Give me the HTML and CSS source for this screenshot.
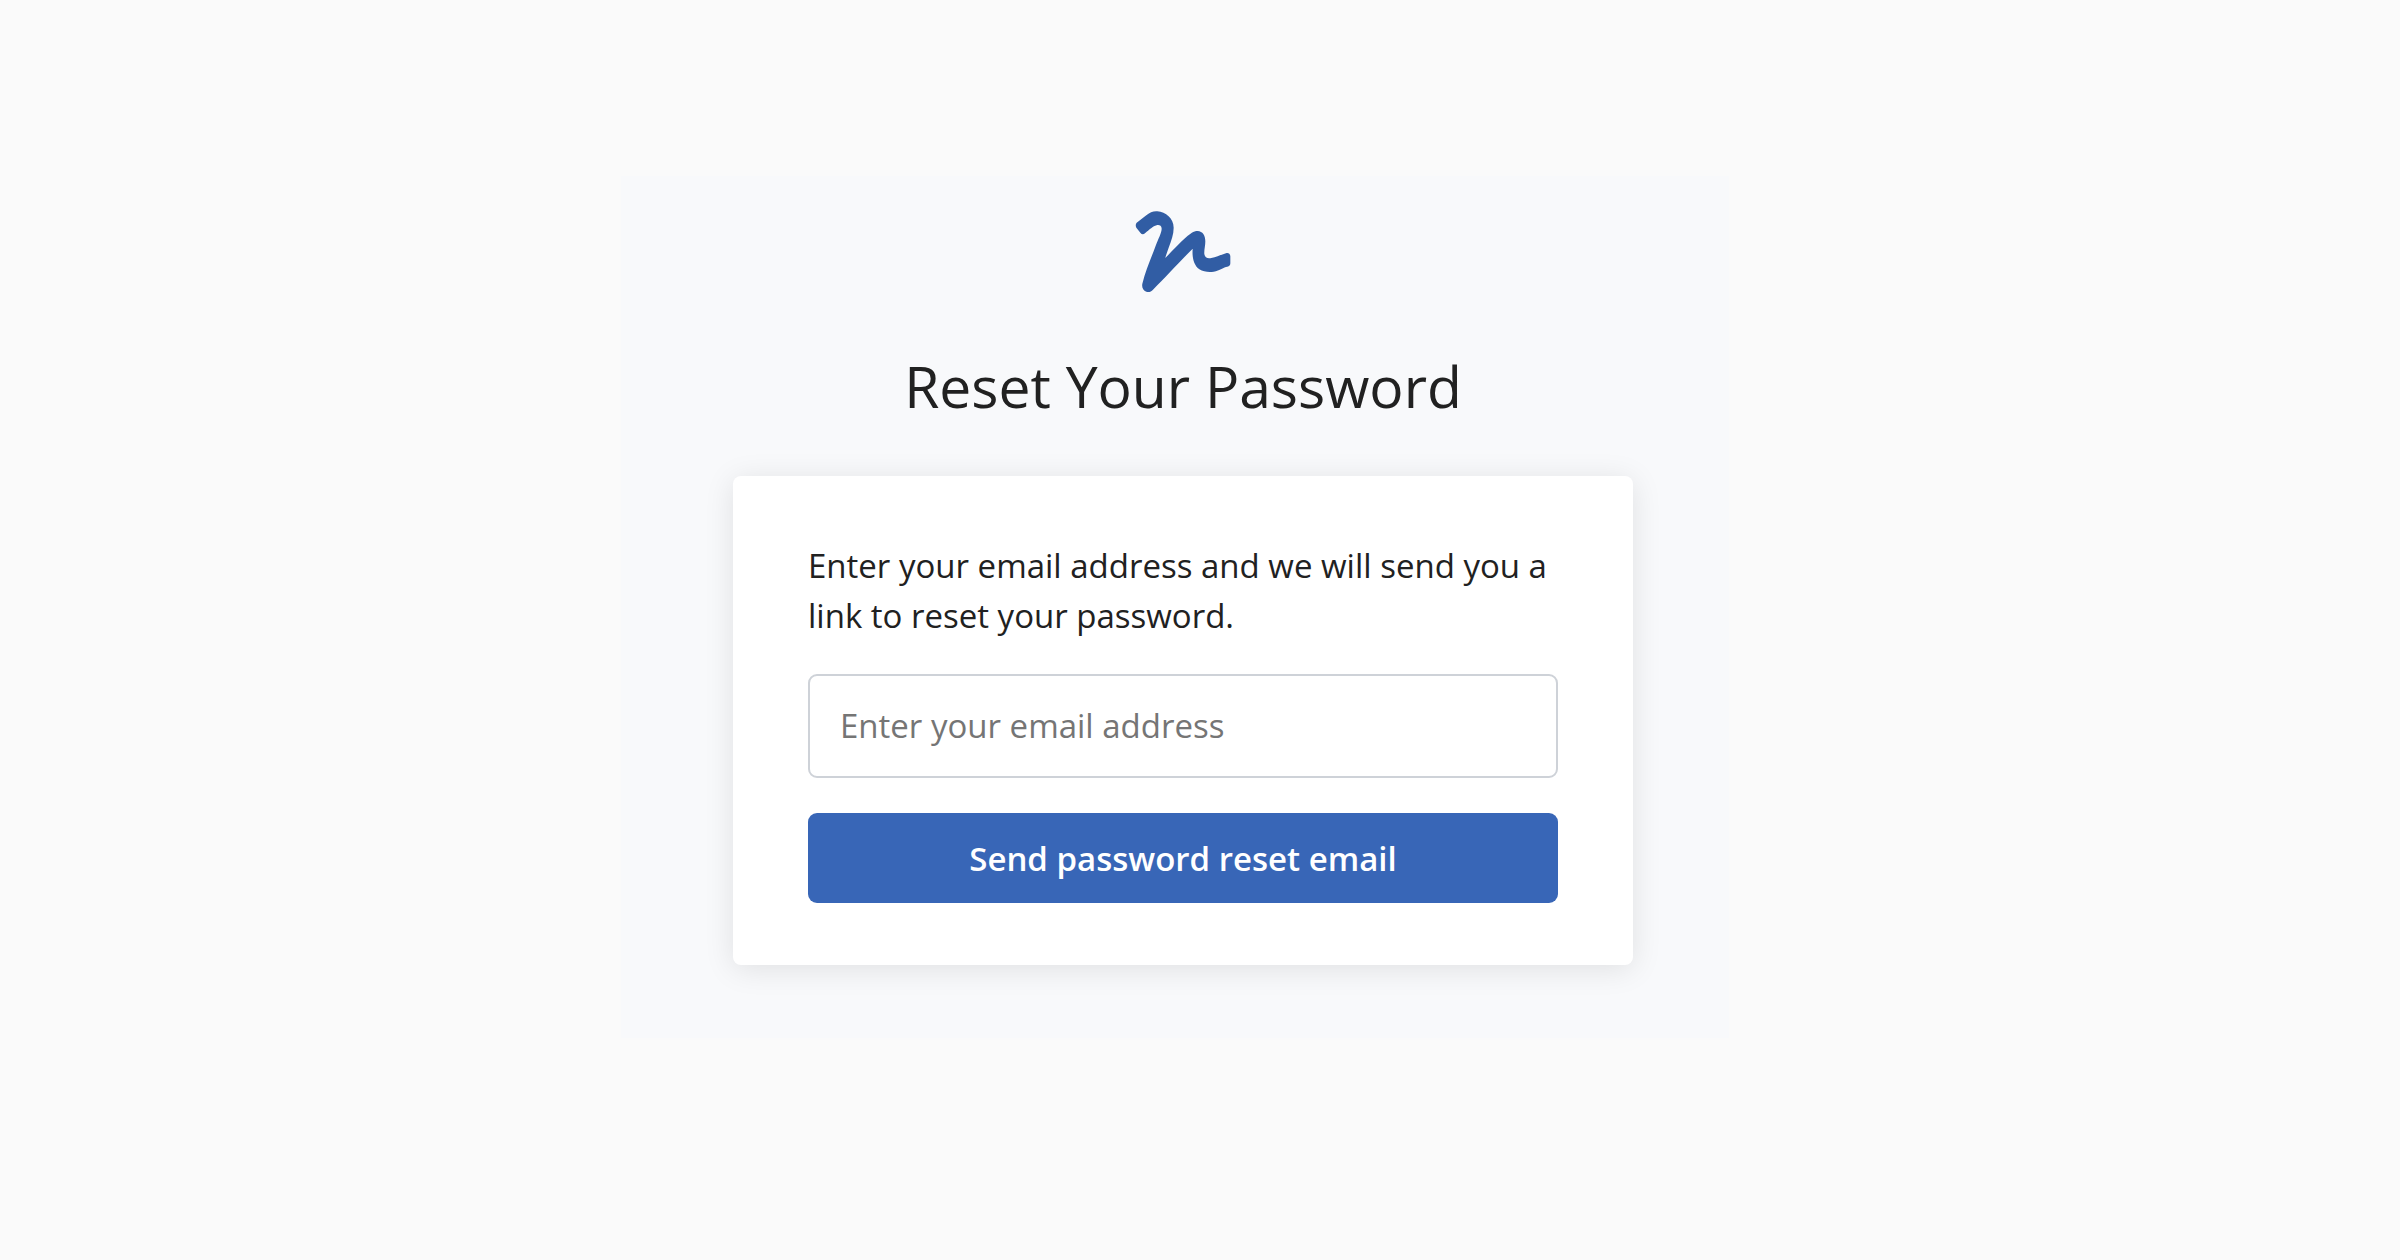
FILE: index.html
```html
<!doctype html>
<html lang="en">
<head>
<meta charset="utf-8">
<title>Reset Your Password</title>
<link rel="stylesheet" href="styles.css">
</head>

<body>
<main class="panel">
	<svg class="logo" viewBox="0 0 372 306" aria-hidden="true">
		<path d="M47 68 L74 47 C87 37 97 33 109 34 C134 35 158 56 158 83 C158 103 151 121 143 143 C138 157 134 168 133 174 C151 156 174 130 196 111 C208 101 217 93 230 93 C245 94 253 106 253 124 C253 138 249 150 250 162 C252 174 260 176 271 174 C288 171 302 163 317 159 Q327 158 328 169 L328 190 Q328 199 319 200 C308 201 297 212 278 215 C262 217 247 215 235 208 C217 195 213 169 215 146 C181 180 133 232 96 269 C90 276 83 277 76 275 C66 272 62 263 64 251 C74 210 90 176 104 137 C112 116 122 98 122 86 C122 77 115 74 109 75 C98 77 86 88 72 100 Q64 106 58 98 L46 83 Q42 75 47 68 Z"/>
	</svg>
	<h1 class="title">Reset Your Password</h1>
	<form class="card">
		<label class="intro" for="email">Enter your email address and we will send you a link to reset your password.</label>
		<input class="email" id="email" type="email" placeholder="Enter your email address">
		<button class="send" type="submit">Send password reset email</button>
	</form>
</main>
</body>
</html>
```
FILE: styles.css
```css
*{margin:0; padding:0; box-sizing:border-box;}
body{background:#fafafa; color:#212121; font-family:"Segoe UI","Open Sans","Noto Sans",sans-serif; font-size:33px; line-height:50px; padding:176px 50px 0 0;}
.panel{max-width:1108px; margin:0 auto; padding:24px 96px 73px 112px; background:#f8f9fb; display:flex; flex-direction:column; align-items:center;}
.logo{width:124px; height:102px; fill:#315da4;}
.title{margin-top:42px; font-size:57px; line-height:84px; font-weight:400; text-align:center;}
.card{width:100%; margin-top:48px; padding:65px 75px 62px; background:#fff; border-radius:8px; box-shadow:0 4px 30px rgba(0,0,0,0.1); display:flex; flex-direction:column;}
.intro{margin-bottom:33px;}
.email{width:100%; height:104px; padding:0 30px 2px; border:2px solid #ced2d8; border-radius:9px; background:#fff; color:#212121; font:inherit;}
.email::placeholder{color:#757575; opacity:1;}
.send{width:100%; height:90px; margin-top:35px; padding-top:2px; border:0; border-radius:9px; background:#3866b7; color:#fff; font:inherit; font-weight:600; cursor:pointer;}
```
